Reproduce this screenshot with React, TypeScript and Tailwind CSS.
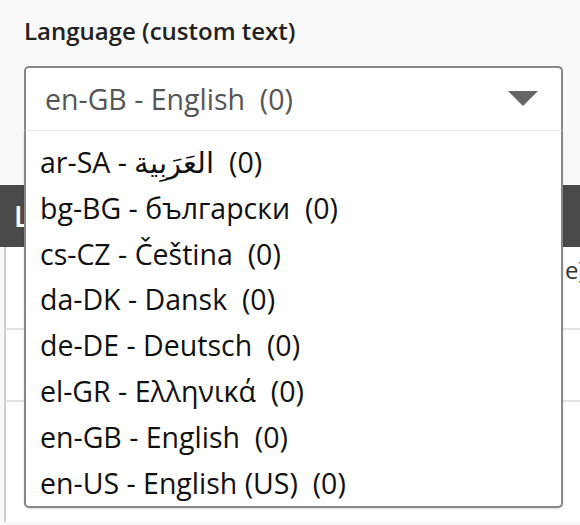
import React from 'react';

const languages = [
  { code: 'ar-SA', name: 'العَرَبِية' },
  { code: 'bg-BG', name: 'български' },
  { code: 'cs-CZ', name: 'Čeština' },
  { code: 'da-DK', name: 'Dansk' },
  { code: 'de-DE', name: 'Deutsch' },
  { code: 'el-GR', name: 'Ελληνικά' },
  { code: 'en-GB', name: 'English' },
  { code: 'en-US', name: 'English (US)' },
];

function TriangleDown() {
  return (
    <svg width="30" height="16" viewBox="0 0 30 16" className="shrink-0">
      <path d="M0 0 H30 L15 15 Z" fill="#666666" />
    </svg>
  );
}

export default function App() {
  return (
    <div className="relative h-[525px] w-[580px] overflow-hidden bg-[#f9f9f9] font-['Open_Sans',sans-serif]">
      <div className="px-6 pt-[14px]">
        <label className="block text-[24px] font-semibold leading-[34px] text-[#222]">Language (custom text)</label>
      </div>

      <div className="relative ml-6 mr-[17px] mt-[18px]">
        {/* closed select */}
        <div className="flex h-[64px] items-center justify-between rounded-t-[5px] border-2 border-b-0 border-[#888] bg-white pl-[19px] pr-[23px]">
          <span className="whitespace-pre text-[28.5px] text-[#555]">{'en-GB - English  (0)'}</span>
          <TriangleDown />
        </div>

        {/* open list */}
        <div className="absolute left-0 right-0 top-[64px] z-10 rounded-b-[5px] border-2 border-t border-[#888] border-t-[#e8e8e8] bg-white pt-[9px] shadow-sm">
          {languages.map((l) => (
            <div key={l.code} className="whitespace-pre pl-[14px] text-[28.5px] leading-[45.8px] text-[#111]">
              {l.code + ' - '}
              <bdi>{l.name}</bdi>
              {'  (0)'}
            </div>
          ))}
        </div>
      </div>

      {/* table behind the list */}
      <div className="mt-[55px] w-[600px]">
        <div className="flex h-[62px] items-center bg-[#4a4a4a] pl-[14px] text-[28px] font-semibold text-white">L</div>
        <div className="ml-[4px] border-l-2 border-[#cfcfcf] bg-white">
          <div className="flex h-[83px] border-b-2 border-[#e4e4e4] pt-[6px] text-[20px] leading-[26px] text-[#333]">
            <div className="pl-[18px]">
              <div>c</div>
              <div>f</div>
            </div>
            <div className="ml-auto w-[35px] pt-[4px] text-[24px]">{'e}'}</div>
          </div>
          <div className="h-[72px] border-b-2 border-[#e4e4e4] pl-[18px] pt-[6px] text-[20px] leading-[26px] text-[#333]">
            <div>c</div>
            <div>l</div>
          </div>
          <div className="h-[120px] pl-[18px] pt-[18px] text-[20px] leading-[28px] text-[#333]">
            <div>c</div>
            <div>-</div>
          </div>
        </div>
      </div>
    </div>
  );
}
